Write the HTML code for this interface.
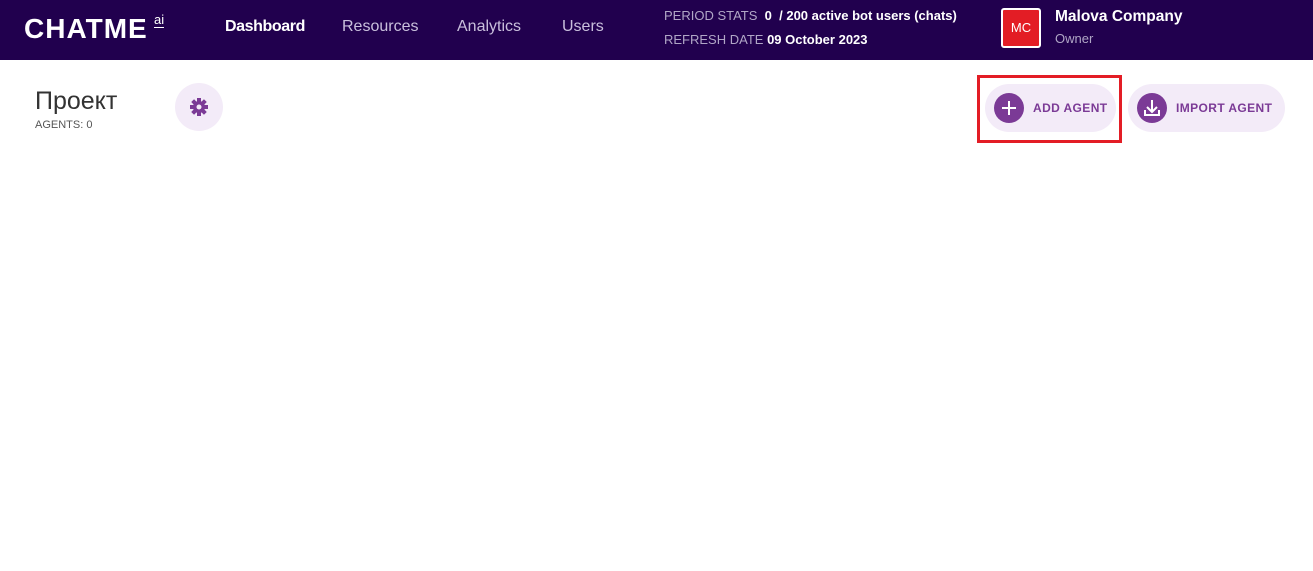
<!DOCTYPE html>
<html><head><meta charset="utf-8"><style>
*{margin:0;padding:0;box-sizing:border-box}
body{width:1313px;height:571px;background:#fff;font-family:"Liberation Sans","Noto Sans CJK SC",sans-serif;position:relative;overflow:hidden}
.hdr{position:absolute;left:0;top:0;width:1313px;height:60px;background:#21004e}
.a{position:absolute;white-space:nowrap}
.btn{position:absolute;height:48px;border-radius:24px;background:#f3ebf8}
.ic{position:absolute;width:30px;height:30px;border-radius:50%;background:#7b3a96;left:9px;top:9px}
.bt{position:absolute;top:17px;font-size:12px;font-weight:bold;color:#7b3a96;letter-spacing:.4px}
</style></head><body>
<div class="hdr">
<div class="a" style="left:24px;top:13px;font-size:28px;font-weight:900;color:#fff;letter-spacing:1px">CHATME</div>
<div class="a" style="left:154px;top:12px;font-size:13px;color:#fff;border-bottom:1px solid #fff;line-height:15px">ai</div>
<div class="a" style="left:225px;top:18px;font-size:16px;color:#fff;font-weight:bold;letter-spacing:-.4px">Dashboard</div>
<div class="a" style="left:342px;top:18px;font-size:16px;color:#c9bfdc">Resources</div>
<div class="a" style="left:457px;top:18px;font-size:16px;color:#c9bfdc">Analytics</div>
<div class="a" style="left:562px;top:18px;font-size:16px;color:#c9bfdc">Users</div>
<div class="a" style="left:664px;top:8px;font-size:13px;color:#b0a6c6">PERIOD STATS &nbsp;<b style="color:#fff">0 &nbsp;/ 200 active bot users (chats)</b></div>
<div class="a" style="left:664px;top:32px;font-size:13px;color:#b0a6c6">REFRESH DATE <b style="color:#fff">09 October 2023</b></div>
<div class="a" style="left:1001px;top:8px;width:40px;height:40px;background:#e31d25;border:2px solid #fff;border-radius:3px;color:#fff;font-size:13px;text-align:center;line-height:36px">MC</div>
<div class="a" style="left:1055px;top:8px;font-size:15.5px;font-weight:bold;color:#fff">Malova Company</div>
<div class="a" style="left:1055px;top:31px;font-size:13px;color:#b0a6c6">Owner</div>
</div>
<div class="a" style="left:35px;top:87px;font-size:25px;color:#333">Проект</div>
<div class="a" style="left:35px;top:119px;font-size:11px;color:#555">AGENTS: 0</div>
<div class="a" style="left:175px;top:83px;width:48px;height:48px;border-radius:50%;background:#f3ebf8">
<svg width="48" height="48" viewBox="0 0 48 48"><g fill="#7b3a96" transform="translate(24 24)">
<circle r="6"/><g id="t"><rect x="-2" y="-9" width="4" height="5"/></g>
<use href="#t" transform="rotate(45)"/><use href="#t" transform="rotate(90)"/><use href="#t" transform="rotate(135)"/><use href="#t" transform="rotate(180)"/><use href="#t" transform="rotate(225)"/><use href="#t" transform="rotate(270)"/><use href="#t" transform="rotate(315)"/>
</g><circle cx="24" cy="24" r="2.5" fill="#f3ebf8"/></svg></div>
<div class="btn" style="left:985px;top:84px;width:131px"><div class="ic"><svg width="30" height="30"><path d="M15 8v14M8 15h14" stroke="#fff" stroke-width="2"/></svg></div><div class="bt" style="left:48px">ADD AGENT</div></div>
<div class="a" style="left:977px;top:75px;width:145px;height:68px;border:3px solid #e31d25"></div>
<div class="btn" style="left:1128px;top:84px;width:157px"><div class="ic"><svg width="30" height="30"><path d="M15 7v12M10 14l5 5 5-5M8 17v5h14v-5" stroke="#fff" stroke-width="2" fill="none"/></svg></div><div class="bt" style="left:48px">IMPORT AGENT</div></div>
</body></html>
